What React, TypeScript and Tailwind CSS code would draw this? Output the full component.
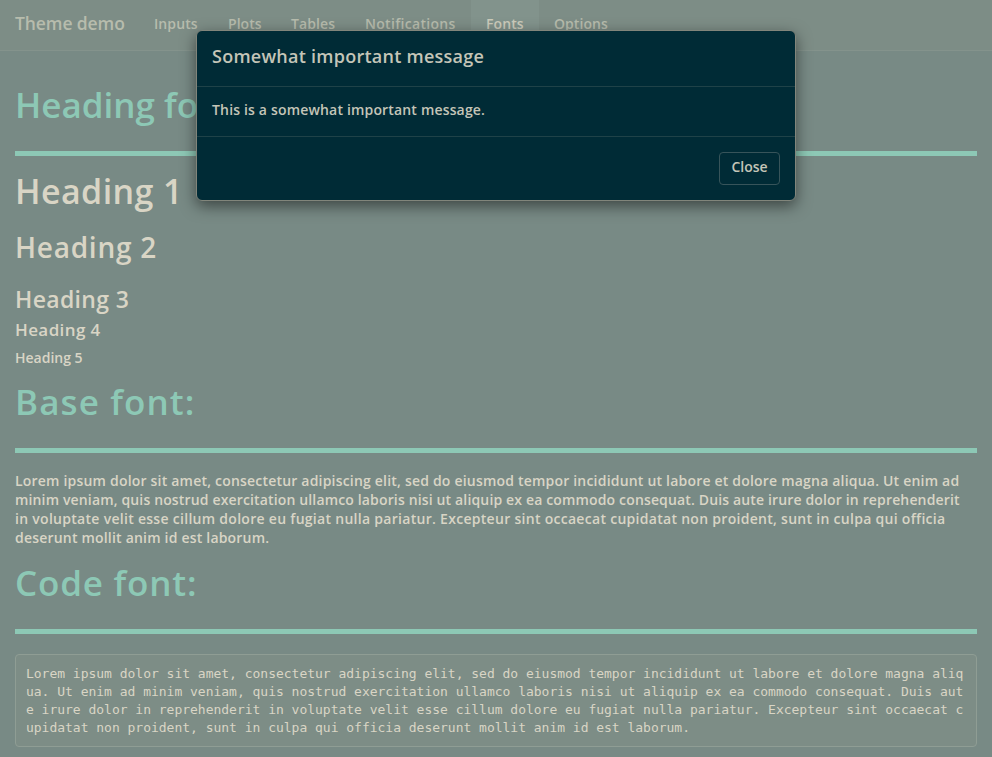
import React from 'react';

const navItems = [
  { label: 'Inputs', box: 'w-[74px]', tracking: 'tracking-[0.1px]' },
  { label: 'Plots', box: 'w-[63px]', tracking: 'tracking-[0.05px]' },
  { label: 'Tables', box: 'w-[74px]', tracking: 'tracking-[0.1px]' },
  { label: 'Notifications', box: 'w-[121px]', tracking: 'tracking-[0.3px]' },
  { label: 'Fonts', box: 'w-[68px]', tracking: 'tracking-[0.1px]', active: true },
  { label: 'Options', box: 'w-[83px]', tracking: 'tracking-[0.05px]' },
];

const paragraph = [
  { text: 'Lorem ipsum dolor sit amet, consectetur adipiscing elit, sed do eiusmod tempor incididunt ut labore et dolore magna aliqua. Ut enim ad', tracking: 'tracking-[0.2px]' },
  { text: 'minim veniam, quis nostrud exercitation ullamco laboris nisi ut aliquip ex ea commodo consequat. Duis aute irure dolor in reprehenderit', tracking: 'tracking-[0.15px]' },
  { text: 'in voluptate velit esse cillum dolore eu fugiat nulla pariatur. Excepteur sint occaecat cupidatat non proident, sunt in culpa qui officia', tracking: 'tracking-[0.29px]' },
  { text: 'deserunt mollit anim id est laborum.', tracking: 'tracking-[0.2px]' },
];

const code =
  'Lorem ipsum dolor sit amet, consectetur adipiscing elit, sed do eiusmod tempor incididunt ut labore et dolore magna aliqua. Ut enim ad minim veniam, quis nostrud exercitation ullamco laboris nisi ut aliquip ex ea commodo consequat. Duis aute irure dolor in reprehenderit in voluptate velit esse cillum dolore eu fugiat nulla pariatur. Excepteur sint occaecat cupidatat non proident, sunt in culpa qui officia deserunt mollit anim id est laborum.';

function Section({ children }: { children: React.ReactNode }) {
  return (
    <h1 className="h-[66px] border-b-5 border-[#8dc8b5] text-[35px] leading-[30px] font-semibold text-[#8dc8b5]">
      {children}
    </h1>
  );
}

function Modal() {
  return (
    <div
      role="dialog"
      className="absolute top-[30px] left-[196px] w-[600px] rounded-md border border-[#81857b] bg-[#002b36] font-semibold text-[#c4c5b8] shadow-[0_5px_15px_rgba(0,0,0,0.5)]"
    >
      <div className="h-14 border-b border-[#1f4248] px-[15px] pt-[13px]">
        <h4 className="text-[18px] leading-6 tracking-[0.25px]">Somewhat important message</h4>
      </div>
      <div className="h-[50px] border-b border-[#1f4248] px-[15px] pt-[13px] text-[14px] leading-5 tracking-[0.17px]">
        This is a somewhat important message.
      </div>
      <div className="flex h-[63px] justify-end p-[15px]">
        <button className="flex h-[33px] w-[61px] justify-center rounded border border-[#37545a] text-[14px] leading-[27px]">
          Close
        </button>
      </div>
    </div>
  );
}

export default function App() {
  return (
    <div className="relative h-[757px] w-[992px] overflow-hidden bg-[#788a85] font-['Open_Sans',sans-serif] whitespace-nowrap text-[#d9d5c5]">
      <nav className="flex h-[51px] border-b border-[#84938c] bg-[#7d8d86] font-semibold text-[#b7bcad]">
        <div className="w-[139px] pt-[11px] pl-[15px] text-[17.5px] leading-6 tracking-[-0.1px]">Theme demo</div>
        {navItems.map((item) => (
          <div
            key={item.label}
            className={`${item.box} ${item.tracking} pt-[14px] pl-[15px] text-[14px] leading-5 ${item.active ? 'bg-[#82938c] text-[#cccbbb]' : ''}`}
          >
            {item.label}
          </div>
        ))}
      </nav>
      <main className="px-[15px]">
        <div className="pt-[39px]">
          <Section>Heading fonts:</Section>
        </div>
        <h1 className="mt-[14px] text-[34px] leading-[42px] font-semibold tracking-[0.4px]">Heading 1</h1>
        <h2 className="mt-[17px] text-[28px] leading-9 font-semibold tracking-[0.75px]">Heading 2</h2>
        <h3 className="mt-5 text-[23px] leading-7 font-semibold tracking-[0.35px]">Heading 3</h3>
        <h4 className="mt-[5px] text-[17px] leading-6 font-semibold tracking-[0.4px]">Heading 4</h4>
        <h5 className="mt-1.5 text-[14px] leading-5 font-semibold">Heading 5</h5>
        <div className="pt-[19px] tracking-[1.1px]">
          <Section>Base font:</Section>
        </div>
        <p className="mt-[18px] text-[14px] leading-[19px] font-semibold">
          {paragraph.map((line) => (
            <span key={line.text} className={`${line.tracking} block`}>
              {line.text}
            </span>
          ))}
        </p>
        <div className="pt-[21px] tracking-[0.8px]">
          <Section>Code font:</Section>
        </div>
        <pre className="mt-5 h-[93px] rounded border border-[#8f9d94] bg-[#7d8d86] px-[10px] pt-[10px] font-['DejaVu_Sans_Mono',monospace] text-[13px] leading-[18px] tracking-[-0.015px] break-all whitespace-pre-wrap">
          {code}
        </pre>
      </main>
      <Modal />
    </div>
  );
}
